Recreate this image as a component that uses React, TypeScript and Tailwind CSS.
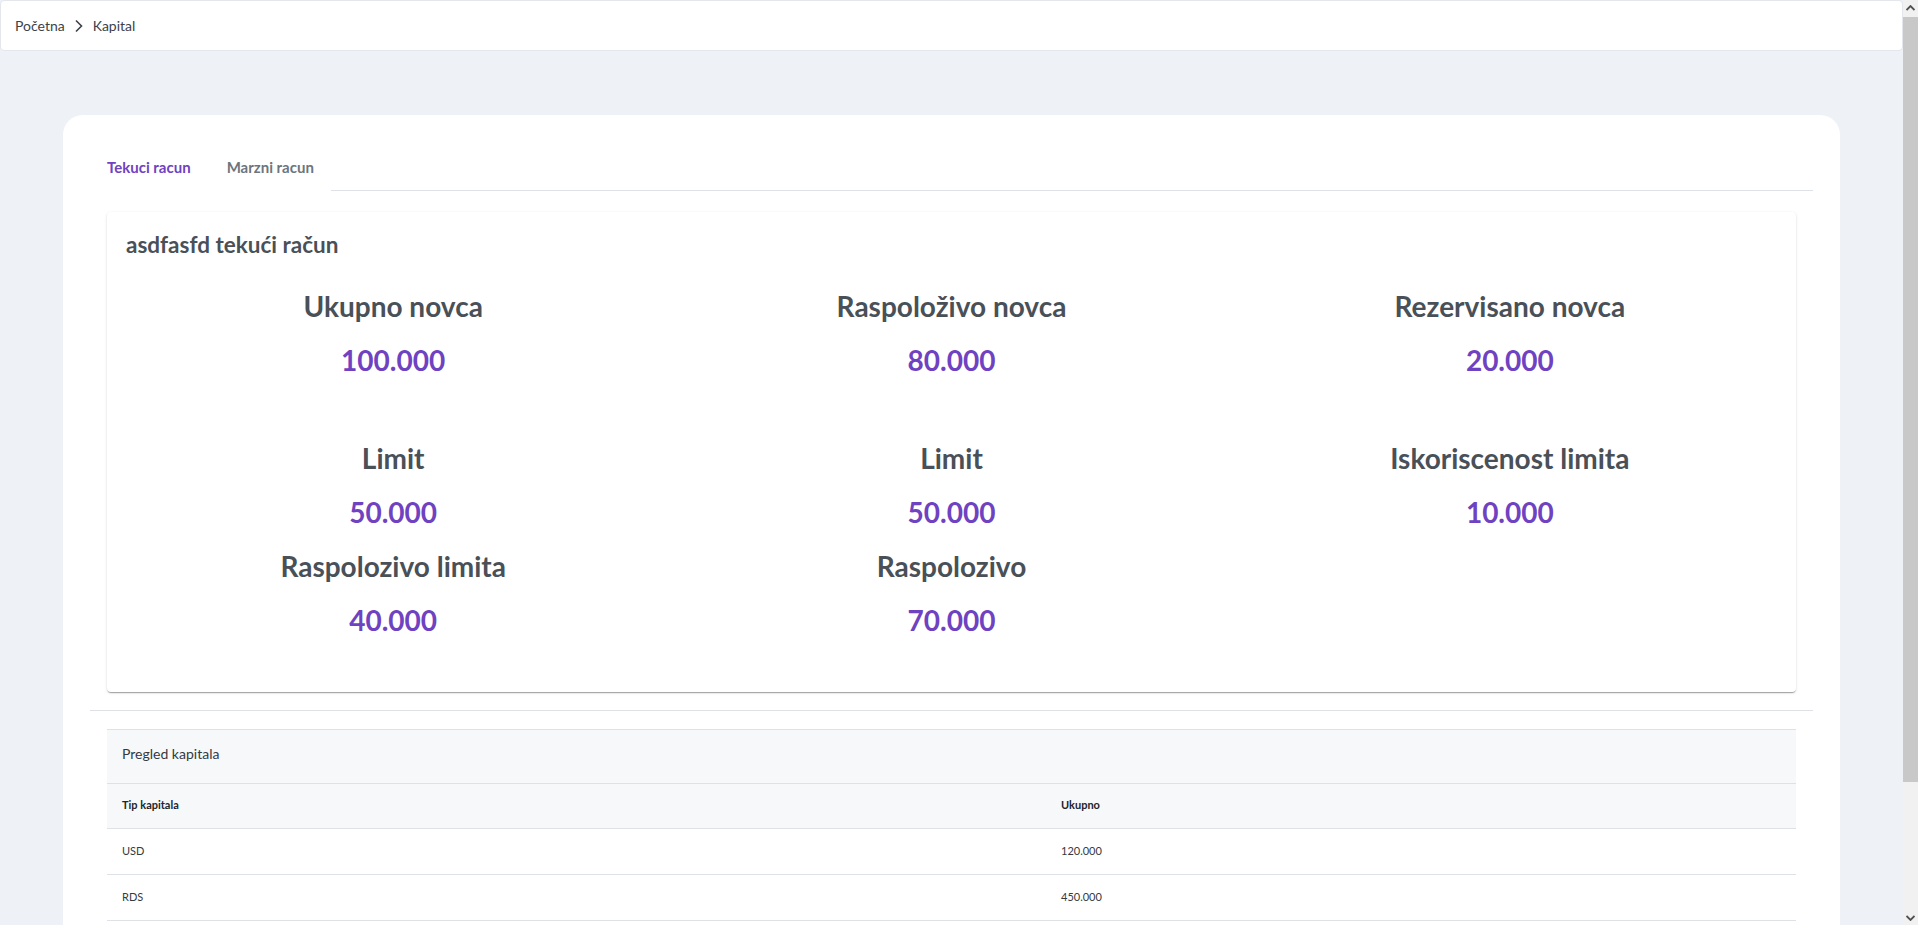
import React from "react";

const stats1 = [
  { label: "Ukupno novca", value: "100.000" },
  { label: "Raspoloživo novca", value: "80.000" },
  { label: "Rezervisano novca", value: "20.000" },
];
const stats2 = [
  { label: "Limit", value: "50.000" },
  { label: "Limit", value: "50.000" },
  { label: "Iskoriscenost limita", value: "10.000" },
  { label: "Raspolozivo limita", value: "40.000" },
  { label: "Raspolozivo", value: "70.000" },
];

function Stat({ label, value }: { label: string; value: string }) {
  return (
    <div className="w-1/3 flex flex-col items-center">
      <div className="h-[34px] leading-[34px] text-[28px] font-bold text-[#495057] mb-[20px]">{label}</div>
      <div className="h-[34px] leading-[34px] text-[28px] font-bold text-[#6f42c1] mb-[20px]">{value}</div>
    </div>
  );
}

function Scrollbar() {
  return (
    <div className="fixed top-0 right-0 w-[15px] h-screen bg-[#f1f1f1] flex flex-col items-center">
      <div className="h-[15px] w-[15px] flex items-center justify-center">
        <svg width="9" height="6" viewBox="0 0 9 6">
          <path d="M0.5 5 L4.5 1 L8.5 5" stroke="#505050" strokeWidth="1.8" fill="none" />
        </svg>
      </div>
      <div className="mt-[2px] h-[765px] w-[15px] bg-[#c8c8c8]" />
      <div className="flex-1" />
      <div className="h-[15px] w-[15px] flex items-center justify-center">
        <svg width="9" height="6" viewBox="0 0 9 6">
          <path d="M0.5 1 L4.5 5 L8.5 1" stroke="#505050" strokeWidth="1.8" fill="none" />
        </svg>
      </div>
    </div>
  );
}

export default function App() {
  return (
    <div
      className="min-h-screen bg-[#eef1f6] pb-[62px]"
      style={{ fontFamily: "Lato, 'Noto Sans', sans-serif" }}
    >
      <div className="w-[1903px]">
        <header className="h-[51px] bg-white border border-[#e3e6ea] rounded-[4px] flex items-center px-[14px] text-[14px] text-[#3d4248]">
          <span>Početna</span>
          <svg className="mx-[9px]" width="10" height="14" viewBox="0 0 10 14" fill="none">
            <path d="M2 1.5 L7.5 7 L2 12.5" stroke="#3d4248" strokeWidth="1.6" />
          </svg>
          <span>Kapital</span>
        </header>

        <main className="pl-[63px] pr-[63px] pt-[64px]">
          <div className="bg-white rounded-[20px] px-[27px] pt-[28px] pb-[95px]">
            <div className="flex h-[48px]">
              <div className="px-[17px] flex items-center text-[15px] font-bold text-[#6f42c1]">Tekuci racun</div>
              <div className="ml-[2px] px-[17px] flex items-center text-[15px] font-bold text-[#6c757d]">Marzni racun</div>
              <div className="flex-1 border-b border-[#dee2e6]" />
            </div>

            <div className="px-[17px] pt-[21px]">
              <div className="bg-white rounded-[4px] px-[7px] pt-[21px] pb-[35px] shadow-[0_2px_1px_-1px_rgba(0,0,0,0.2),0_1px_1px_0_rgba(0,0,0,0.14),0_1px_3px_0_rgba(0,0,0,0.12)]">
                <div className="pl-[12px] h-[24px] leading-[24px] text-[22.5px] font-bold text-[#495057]">asdfasfd tekući račun</div>
                <div className="mt-[32px] flex flex-wrap mb-[44px]">
                  {stats1.map((s, i) => (
                    <Stat key={i} {...s} />
                  ))}
                </div>
                <div className="flex flex-wrap">
                  {stats2.map((s, i) => (
                    <Stat key={i} {...s} />
                  ))}
                </div>
              </div>
            </div>

            <div className="mt-[18px] border-b border-[#dee2e6]" />

            <div className="px-[17px] pt-[18px]">
              <div className="border-t border-[#dee2e6]">
                <div className="h-[54px] bg-[#f7f8fa] border-b border-[#dee2e6] flex items-center px-[15px] pb-[6px] text-[14px] text-[#343a40]">
                  Pregled kapitala
                </div>
                <div className="grid grid-cols-[939px_1fr] h-[45px] bg-[#f7f8fa] border-b border-[#dee2e6] items-center pb-[2px] text-[11px] font-bold text-[#212529]">
                  <div className="px-[15px]">Tip kapitala</div>
                  <div className="px-[15px]">Ukupno</div>
                </div>
                {[
                  ["USD", "120.000"],
                  ["RDS", "450.000"],
                ].map(([a, b]) => (
                  <div key={a} className="grid grid-cols-[939px_1fr] h-[46px] border-b border-[#dee2e6] items-center text-[11px] text-[#343a40]">
                    <div className="px-[15px]">{a}</div>
                    <div className="px-[15px]">{b}</div>
                  </div>
                ))}
              </div>
            </div>
          </div>
        </main>
      </div>
      <Scrollbar />
    </div>
  );
}
